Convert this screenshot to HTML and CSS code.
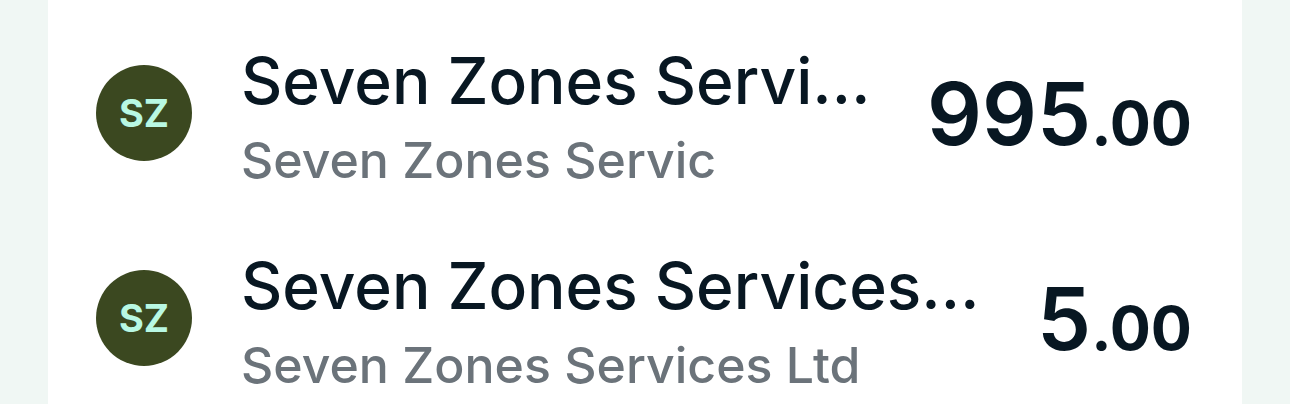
FILE: index.html
```html
<!DOCTYPE html>
<html lang="en">
<head>
<meta charset="utf-8">
<title>Transactions</title>
<link rel="stylesheet" href="styles.css">
</head>
<body>
<main class="panel">
<ul class="list">
<li class="row">
<span class="avatar">SZ</span>
<div class="details"><p class="name">Seven Zones Servi…</p><p class="note">Seven Zones Servic</p></div>
<p class="amount">995<span class="pence">.00</span></p>
</li>
<li class="row">
<span class="avatar">SZ</span>
<div class="details"><p class="name">Seven Zones Services…</p><p class="note">Seven Zones Services Ltd</p></div>
<p class="amount">5<span class="pence">.00</span></p>
</li>
</ul>
</main>
</body>
</html>
```
FILE: styles.css
```css
* { box-sizing: border-box; }
body { margin: 0; background: #f0f7f4; color: #081722; font-family: Inter, sans-serif; }
p { margin: 0; }
.panel { margin: 0 48px; padding: 41px 50px 0 48px; background: #fff; min-height: 100vh; }
.list { list-style: none; margin: 0; padding: 0; display: flex; flex-direction: column; gap: 61px; }
.row { display: flex; align-items: center; gap: 49px; }
.avatar { flex: none; width: 96px; height: 96px; border-radius: 50%; background: #3b4820; color: #b8f8e3; display: grid; place-items: center; font-size: 38px; font-weight: 700; }
.details { flex: 1; min-width: 0; }
.name { font-size: 64px; line-height: 80px; font-weight: 500; white-space: nowrap; }
.note { font-size: 50px; line-height: 62px; margin-top: 8px; margin-bottom: -6px; color: #6b737a; font-weight: 500; white-space: nowrap; }
.amount { padding-top: 10px; font-size: 86px; line-height: 100px; font-weight: 600; white-space: nowrap; }
.pence { font-size: 61px; font-weight: 700; }
```
